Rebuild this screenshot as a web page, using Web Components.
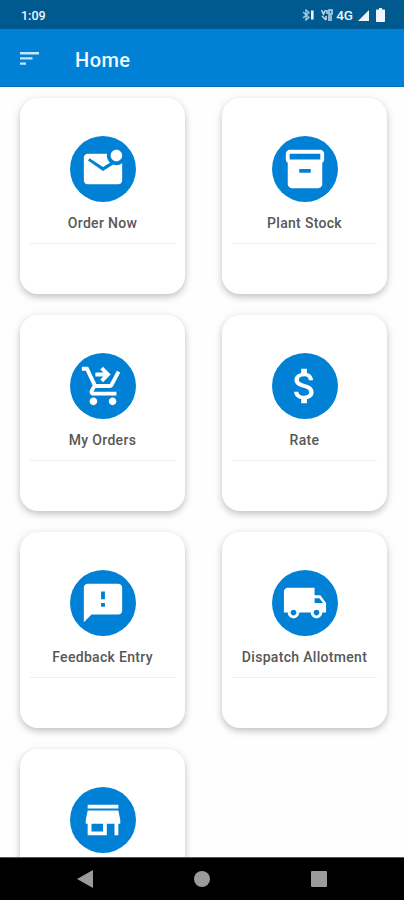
<!DOCTYPE html>
<html lang="en">
<head>
  <meta charset="UTF-8">
  <meta name="viewport" content="width=device-width, initial-scale=1.0">
  <title>Home</title>
  <style>
    html, body {
      margin: 0;
      height: 100%;
      overflow: hidden;
      background-color: #fefefe;
      font-family: Roboto, "Noto Sans", sans-serif;
    }
  </style>
</head>
<body>
  <home-screen></home-screen>

  <script>
    const icons = {
      mail: '<path d="M22 8.98V18c0 1.1-.9 2-2 2H4c-1.1 0-2-.9-2-2V6c0-1.1.9-2 2-2h10.1c-.06.32-.1.66-.1 1 0 1.48.65 2.79 1.67 3.71L12 11 5 6.400 4.200 7.600 12 13l5.3-3.32c.54.2 1.1.32 1.7.32 1.13 0 2.16-.39 3-1.02zM16 5c0 1.66 1.34 3 3 3s3-1.34 3-3-1.34-3-3-3-3 1.34-3 3z"/>',
      stock: '<path d="M20 2H4c-1 0-2 .9-2 2v3.01c0 .72.43 1.34 1 1.69V20c0 1.1 1.1 2 2 2h14c.9 0 2-.9 2-2V8.7c.57-.35 1-.97 1-1.69V4c0-1.1-1-2-2-2zm-5 12H9v-2h6v2zm5-7H4V4l16-.02V7z"/>',
      cart: '<path d="M7 18c-1.1 0-1.99.9-1.99 2S5.9 22 7 22s2-.9 2-2-.9-2-2-2zm10 0c-1.1 0-1.99.9-1.99 2s.89 2 1.99 2 2-.9 2-2-.9-2-2-2zm-8.9-5h7.45c.75 0 1.41-.41 1.75-1.03L21 4.96 19.25 4l-3.7 7H8.53L4.27 2H1v2h2l3.6 7.59-1.35 2.44C4.52 15.37 5.48 17 7 17h12v-2H7l1.1-2zM12 2l4 4-4 4-1.41-1.41L12.17 7H8V5h4.17l-1.59-1.59L12 2z"/>',
      money: '<path d="M11.8 10.9c-2.27-.59-3-1.2-3-2.15 0-1.09 1.01-1.85 2.7-1.85 1.78 0 2.44.85 2.5 2.1h2.21c-.07-1.72-1.12-3.3-3.21-3.81V3h-3v2.16c-1.94.42-3.5 1.68-3.5 3.61 0 2.31 1.91 3.46 4.7 4.13 2.5.6 3 1.48 3 2.41 0 .69-.49 1.79-2.7 1.79-2.06 0-2.87-.92-2.98-2.1h-2.2c.12 2.19 1.76 3.42 3.68 3.83V21h3v-2.15c1.95-.37 3.5-1.5 3.5-3.55 0-2.84-2.43-3.81-4.7-4.4z"/>',
      feedback: '<path d="M20 2H4c-1.1 0-1.99.9-1.99 2L2 22l4-4h14c1.1 0 2-.9 2-2V4c0-1.1-.9-2-2-2zm-7 12h-2v-2h2v2zm0-4h-2V6h2v4z"/>',
      truck: '<path d="M20 8h-3V4H3c-1.1 0-2 .9-2 2v11h2c0 1.66 1.34 3 3 3s3-1.34 3-3h6c0 1.66 1.34 3 3 3s3-1.34 3-3h2v-5l-3-4zM6 18.5c-.83 0-1.5-.67-1.5-1.5s.67-1.5 1.5-1.5 1.5.67 1.5 1.5-.67 1.5-1.5 1.5zm13.5-9l1.96 2.5H17V9.5h2.5zm-1.5 9c-.83 0-1.5-.67-1.5-1.5s.67-1.5 1.5-1.5 1.5.67 1.5 1.5-.67 1.5-1.5 1.5z"/>',
      store: '<path d="M20 4H4v2h16V4zm1 10v-2l-1-5H4l-1 5v2h1v6h10v-6h4v6h2v-6h1zm-9 4H6v-4h6v4z"/>'
    };

    class StatusBar extends HTMLElement {
      constructor() {
        super();
        this._shadowDOM = this.attachShadow({mode: 'open'});
      }

      connectedCallback() {
        this.render();
      }

      render() {
        this._shadowDOM.innerHTML = `
        <style>
          :host {
            display: flex;
            flex: none;
            box-sizing: border-box;
            height: 29px;
            padding: 1px 19px 0 21px;
            align-items: center;
            justify-content: space-between;
            background-color: #005a90;
            color: #eef6fb;
            font-size: 12.5px;
            font-weight: 500;
          }
          .right {
            display: flex;
            align-items: center;
          }
          .network {
            font-size: 13.5px;
          }
          svg {
            display: block;
            fill: #eef6fb;
          }
          .bluetooth { margin-right: 7px; }
          .volte { margin-right: 3px; }
          .signal { margin-left: 5px; }
          .battery { margin-left: 7px; }
        </style>
        <span>1:09</span>
        <div class="right">
          <svg class="bluetooth" width="12" height="12" viewBox="0 0 12 12">
            <path d="M1 3l6 5.5-3 2.5V1l3 2.5L1 9" fill="none" stroke="#a9cbe0" stroke-width="1.3"/>
            <rect x="9" y="1.5" width="2.600" height="9"/>
          </svg>
          <svg class="volte" width="12" height="12" viewBox="0 0 12 12">
            <g fill="none" stroke="#c3dbe9" stroke-width="1.5">
              <path d="M.5 1l2 4 2-4M6 1v4M8 1h3v4H8zM1 7l4 4M5 7v4M7 7h4M7 9h4M7 11h4"/>
            </g>
          </svg>
          <span class="network">4G</span>
          <svg class="signal" width="11" height="11" viewBox="0 0 11 11"><path d="M11 0v11H0z"/></svg>
          <svg class="battery" width="9" height="14" viewBox="0 0 9 14"><path d="M3 0h3v1.5h2c.6 0 1 .4 1 1V13c0 .6-.4 1-1 1H1c-.6 0-1-.4-1-1V2.500c0-.6.4-1 1-1h2z"/></svg>
        </div>`;
      }
    }

    class AppHeader extends HTMLElement {
      constructor() {
        super();
        this._shadowDOM = this.attachShadow({mode: 'open'});
      }

      connectedCallback() {
        this.render();
      }

      render() {
        this._shadowDOM.innerHTML = `
        <style>
          :host {
            display: flex;
            flex: none;
            box-sizing: border-box;
            height: 58px;
            padding: 4px 20px 0;
            align-items: center;
            gap: 36px;
            background-color: #0081d5;
            border-bottom: 1px solid #0670b4;
            color: #f2faff;
          }
          svg {
            display: block;
            margin-bottom: 3px;
            fill: #c4e6f8;
          }
          h1 {
            margin: 0;
            font-size: 20px;
            font-weight: 500;
            letter-spacing: .45px;
          }
        </style>
        <svg width="19" height="13" viewBox="0 0 19 13">
          <path d="M0 0h19v2.500H0zM0 5.200h12.500v2.400H0zM0 10.400h6v2.400H0z"/>
        </svg>
        <h1><slot></slot></h1>`;
      }
    }

    class MenuCard extends HTMLElement {
      constructor() {
        super();
        this._shadowDOM = this.attachShadow({mode: 'open'});
      }

      connectedCallback() {
        this.render();
      }

      render() {
        this._shadowDOM.innerHTML = `
        <style>
          :host {
            display: flex;
            box-sizing: border-box;
            flex-direction: column;
            align-items: center;
            height: 196px;
            padding: 38px 10px 0;
            border-radius: 18px;
            background-color: #fff;
            box-shadow: 0 3px 6px rgba(0, 0, 0, .18), 0 2px 12px rgba(0, 0, 0, .08);
            color: #585858;
          }
          .circle {
            display: flex;
            flex: none;
            width: 66px;
            height: 66px;
            align-items: center;
            justify-content: center;
            border-radius: 50%;
            background-color: #0081d5;
          }
          svg {
            display: block;
            fill: #fff;
          }
          .label {
            width: 100%;
            box-sizing: border-box;
            height: 42px;
            padding-top: 13px;
            border-bottom: 1px solid #efefef;
            text-align: center;
            white-space: nowrap;
            font-size: 14px;
            font-weight: 500;
            line-height: 17px;
            letter-spacing: .31px;
          }
        </style>
        <div class="circle">
          <svg width="46" height="46" viewBox="0 0 24 24">${icons[this.getAttribute('icon')]}</svg>
        </div>
        <div class="label"><slot></slot></div>`;
      }
    }

    class NavBar extends HTMLElement {
      constructor() {
        super();
        this._shadowDOM = this.attachShadow({mode: 'open'});
      }

      connectedCallback() {
        this.render();
      }

      render() {
        this._shadowDOM.innerHTML = `
        <style>
          :host {
            display: flex;
            flex: none;
            box-sizing: border-box;
            height: 43px;
            padding: 0 77px;
            align-items: center;
            justify-content: space-between;
            background-color: #000;
            border-top: 1px solid #555;
          }
          svg {
            display: block;
            fill: #9b9b9b;
          }
        </style>
        <svg width="16" height="18" viewBox="0 0 16 18"><path d="M16 0v18L0 9z"/></svg>
        <svg width="16" height="16" viewBox="0 0 16 16"><circle cx="8" cy="8" r="8"/></svg>
        <svg width="16" height="16" viewBox="0 0 16 16"><rect width="16" height="16" rx="1"/></svg>`;
      }
    }

    class HomeScreen extends HTMLElement {
      constructor() {
        super();
        this._shadowDOM = this.attachShadow({mode: 'open'});
      }

      connectedCallback() {
        this.render();
      }

      render() {
        this._shadowDOM.innerHTML = `
        <style>
          :host {
            display: flex;
            flex-direction: column;
            height: 100vh;
          }
          main {
            display: grid;
            flex: 1;
            min-height: 0;
            overflow: hidden;
            grid-template-columns: 165px 165px;
            grid-auto-rows: 196px;
            gap: 21px 37px;
            padding: 11px 17px 0 20px;
          }
        </style>
        <status-bar></status-bar>
        <app-header>Home</app-header>
        <main>
          <menu-card icon="mail">Order Now</menu-card>
          <menu-card icon="stock">Plant Stock</menu-card>
          <menu-card icon="cart">My Orders</menu-card>
          <menu-card icon="money">Rate</menu-card>
          <menu-card icon="feedback">Feedback Entry</menu-card>
          <menu-card icon="truck">Dispatch Allotment</menu-card>
          <menu-card icon="store"></menu-card>
        </main>
        <nav-bar></nav-bar>`;
      }
    }

    customElements.define('status-bar', StatusBar);
    customElements.define('app-header', AppHeader);
    customElements.define('menu-card', MenuCard);
    customElements.define('nav-bar', NavBar);
    customElements.define('home-screen', HomeScreen);
  </script>
</body>
</html>
